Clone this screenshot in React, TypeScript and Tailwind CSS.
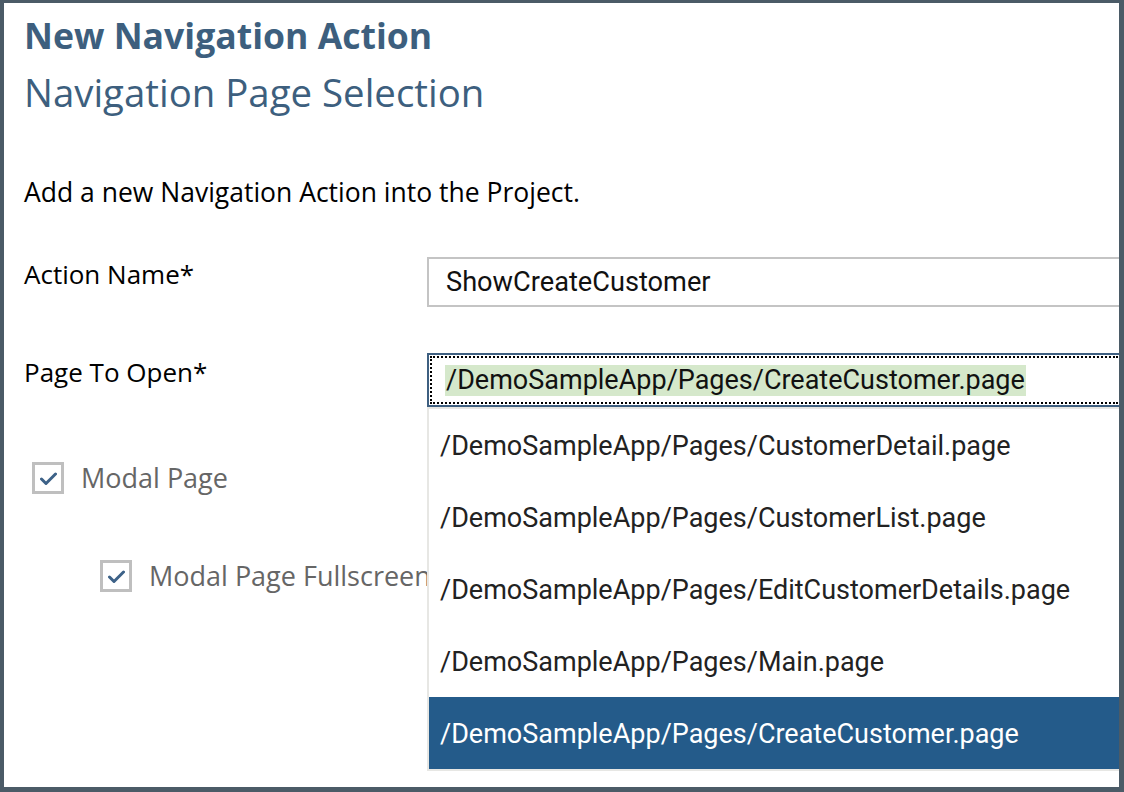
const PAGES = [
  "/DemoSampleApp/Pages/CustomerDetail.page",
  "/DemoSampleApp/Pages/CustomerList.page",
  "/DemoSampleApp/Pages/EditCustomerDetails.page",
  "/DemoSampleApp/Pages/Main.page",
  "/DemoSampleApp/Pages/CreateCustomer.page",
];

const SELECTED = "/DemoSampleApp/Pages/CreateCustomer.page";

function CheckBox({ label }: { label: string }) {
  return (
    <div className="flex items-center gap-[17px] h-[32px]">
      <div className="w-[32px] h-[32px] border-[3px] border-[#bfbfbf] bg-white flex items-center justify-center">
        <svg width="17" height="14" viewBox="0 0 17 14" className="mt-[1px]">
          <polyline points="1.5,7 6,11.5 15.5,2" fill="none" stroke="#3d6288" strokeWidth="3" strokeLinecap="round" strokeLinejoin="round" />
        </svg>
      </div>
      <span className="text-[27px] leading-[32px] text-[#666666] whitespace-nowrap">{label}</span>
    </div>
  );
}

export default function App() {
  return (
    <div
      className="w-[1124px] h-[792px] bg-[#4b5b67] pt-[3px] pl-[4px] pr-[5px] pb-[5px] overflow-hidden"
      style={{ fontFamily: '"Open Sans", "Noto Sans", sans-serif' }}
    >
      <div className="relative w-full h-full bg-white overflow-hidden">
        <div className="pl-[20px] pt-[10px] text-[#3d5f7e]">
          <h1 className="text-[35.6px] font-bold leading-[44px]">New Navigation Action</h1>
          <h2 className="text-[38.4px] leading-[46px] mt-[12px]">Navigation Page Selection</h2>
        </div>

        <p className="pl-[20px] mt-[60px] text-[26.5px] leading-[34px] text-black">
          Add a new Navigation Action into the Project.
        </p>

        <div className="flex items-start mt-[48px]">
          <div className="w-[423px] pl-[20px] text-[26px] leading-[34px] text-black">Action Name*</div>
          <div className="flex-1 h-[50px] border-2 border-r-0 border-[#c4c4c4] flex items-center pl-[17px]">
            <span className="text-[27.2px] text-[#111]" style={{ fontFamily: '"Roboto", sans-serif' }}>
              ShowCreateCustomer
            </span>
          </div>
        </div>

        <div className="flex items-start mt-[46px]">
          <div className="w-[423px] pl-[20px] text-[26px] leading-[34px] text-black pt-[2px]">Page To Open*</div>
          <div className="flex-1 h-[54px] border-2 border-r-0 border-[#3e5f80] p-[1px]">
            <div className="h-full border-2 border-dotted border-r-0 border-black flex items-center pl-[13px]">
              <span
                className="text-[27px] leading-[31px] bg-[#d5e8cb] text-[#111] px-[1px]"
                style={{ fontFamily: '"Roboto", sans-serif' }}
              >
                {SELECTED}
              </span>
            </div>
          </div>
        </div>

        <div className="pl-[28px] mt-[55px]">
          <CheckBox label="Modal Page" />
        </div>
        <div className="pl-[96px] mt-[66px]">
          <CheckBox label="Modal Page Fullscreen" />
        </div>

        <div className="absolute left-[423px] top-[404px] w-[720px] bg-[#e7e7e4] pl-[2px] pb-[2px] pt-[2px]">
          <ul className="bg-white">
            {PAGES.map((p, i) => (
              <li
                key={p}
                className={`h-[72px] flex items-center pl-[11px] pt-[3px] text-[27px] ${
                  i === PAGES.length - 1 ? "bg-[#245b8a] text-white" : "text-[#222]"
                }`}
                style={{ fontFamily: '"Roboto", sans-serif' }}
              >
                {p}
              </li>
            ))}
          </ul>
        </div>
      </div>
    </div>
  );
}
